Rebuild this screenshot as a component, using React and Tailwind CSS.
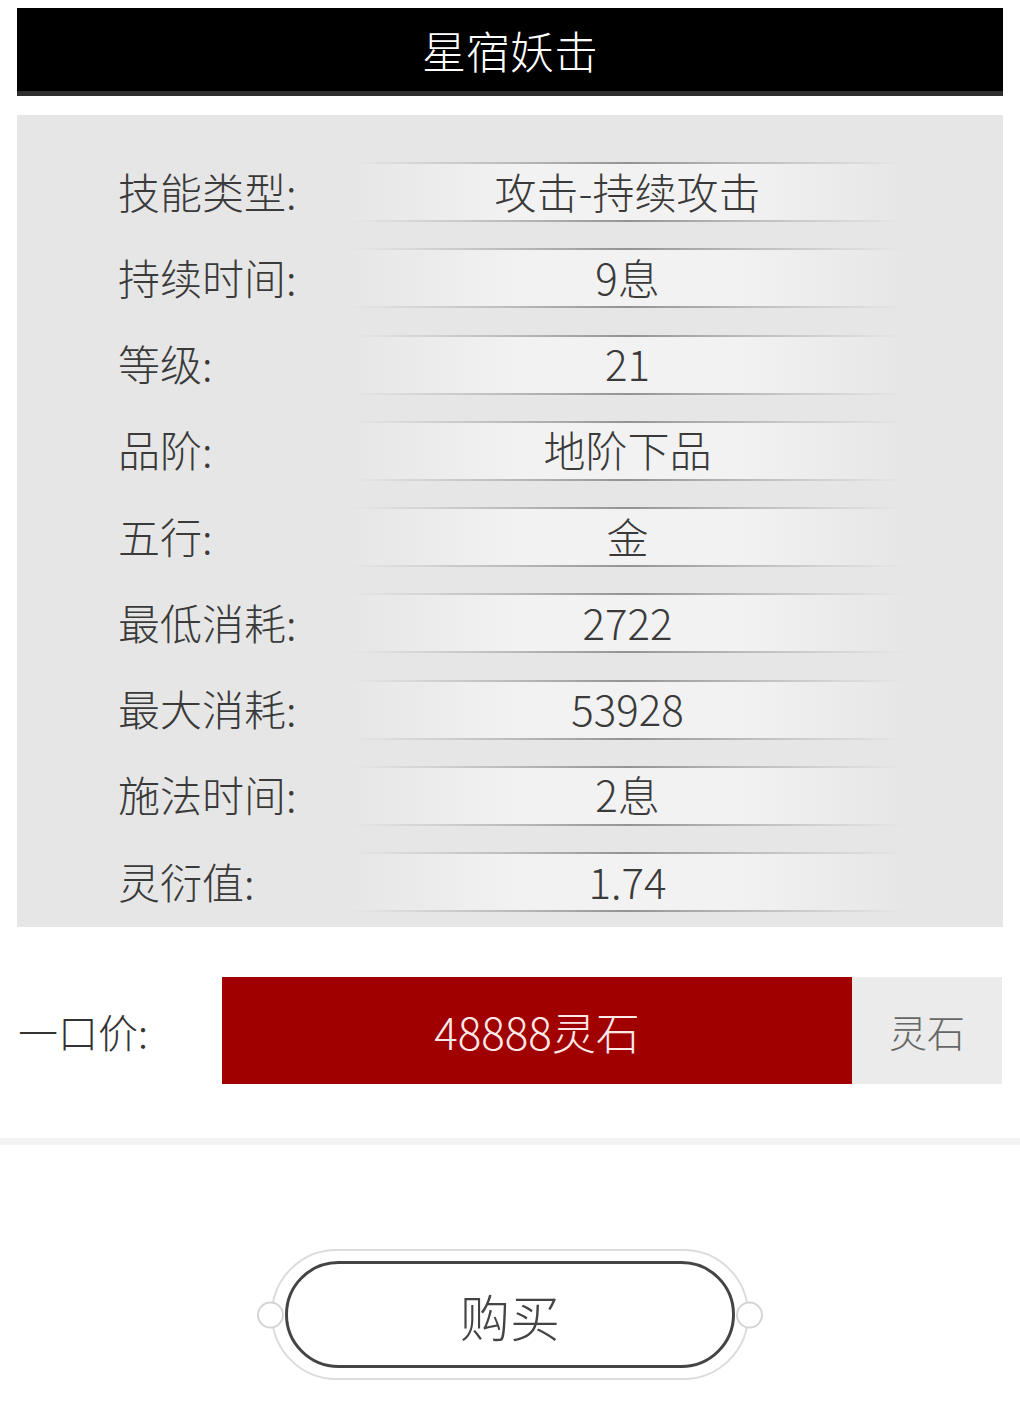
const FONT = { fontFamily: '"Noto Sans CJK SC", "Noto Sans", sans-serif' };

const rows = [
  ['技能类型:', '攻击-持续攻击'],
  ['持续时间:', '9息'],
  ['等级:', '21'],
  ['品阶:', '地阶下品'],
  ['五行:', '金'],
  ['最低消耗:', '2722'],
  ['最大消耗:', '53928'],
  ['施法时间:', '2息'],
  ['灵衍值:', '1.74'],
];

function Line() {
  return <div className="h-[2px] w-full bg-[linear-gradient(to_right,rgba(160,160,160,0),#939393_50%,rgba(160,160,160,0))]" />;
}

function Row({ label, value }) {
  return (
    <div className="flex h-[86.25px] items-center">
      <div className="w-[333px] pb-[3px] pl-[101px] text-[42px] font-light leading-none text-[#3a3a3a]">{label}</div>
      <div className="flex h-[60px] w-[555px] flex-col justify-between bg-[linear-gradient(to_right,rgba(242,242,242,0),#f2f2f2_30%,#f2f2f2_70%,rgba(242,242,242,0))]">
        <Line />
        <div className="mb-[3px] text-center text-[42px] font-light leading-none text-[#3a3a3a]">{value}</div>
        <Line />
      </div>
    </div>
  );
}

export default function App() {
  return (
    <div className="w-[1020px] bg-white pb-[38px]" style={FONT}>
      <div className="px-[17px] pt-[8px]">
        <div className="flex h-[88px] items-center justify-center border-b-[5px] border-[#2e2e2e] bg-black">
          <span className="text-[44px] font-light leading-none text-white">星宿妖击</span>
        </div>
      </div>

      <div className="mx-[17px] mt-[19px] bg-[#e6e6e6] pb-[2px] pt-[34px]">
        {rows.map(([label, value]) => (
          <Row key={label} label={label} value={value} />
        ))}
      </div>

      <div className="mt-[50px] flex h-[107px] items-center pl-[18px] pr-[18px]">
        <div className="w-[204px] text-[40px] font-light leading-none text-[#333]">一口价:</div>
        <div className="flex h-full w-[630px] items-center justify-center bg-[#a00000]">
          <span className="text-[44px] font-light leading-none text-[#ffe8e8]">48888灵石</span>
        </div>
        <div className="flex h-full w-[150px] items-center justify-center bg-[#ebebeb]">
          <span className="text-[38px] font-light leading-none text-[#666]">灵石</span>
        </div>
      </div>

      <div className="mt-[54px] h-[7px] w-full bg-[#f3f3f3]" />

      <div className="mt-[104px] flex justify-center">
        <div className="relative h-[131px] w-[478px] rounded-full border-2 border-[#dcdcdc] bg-white px-[12px] py-[10px]">
          <div className="absolute left-[-16px] top-1/2 h-[27px] w-[27px] -translate-y-1/2 rounded-full border-2 border-[#d4d4d4] bg-white" />
          <div className="absolute right-[-16px] top-1/2 h-[27px] w-[27px] -translate-y-1/2 rounded-full border-2 border-[#d4d4d4] bg-white" />
          <div className="flex h-full w-full items-center justify-center rounded-full border-[3px] border-[#444]">
            <span className="text-[50px] font-light leading-none text-[#444]">购买</span>
          </div>
        </div>
      </div>
    </div>
  );
}
